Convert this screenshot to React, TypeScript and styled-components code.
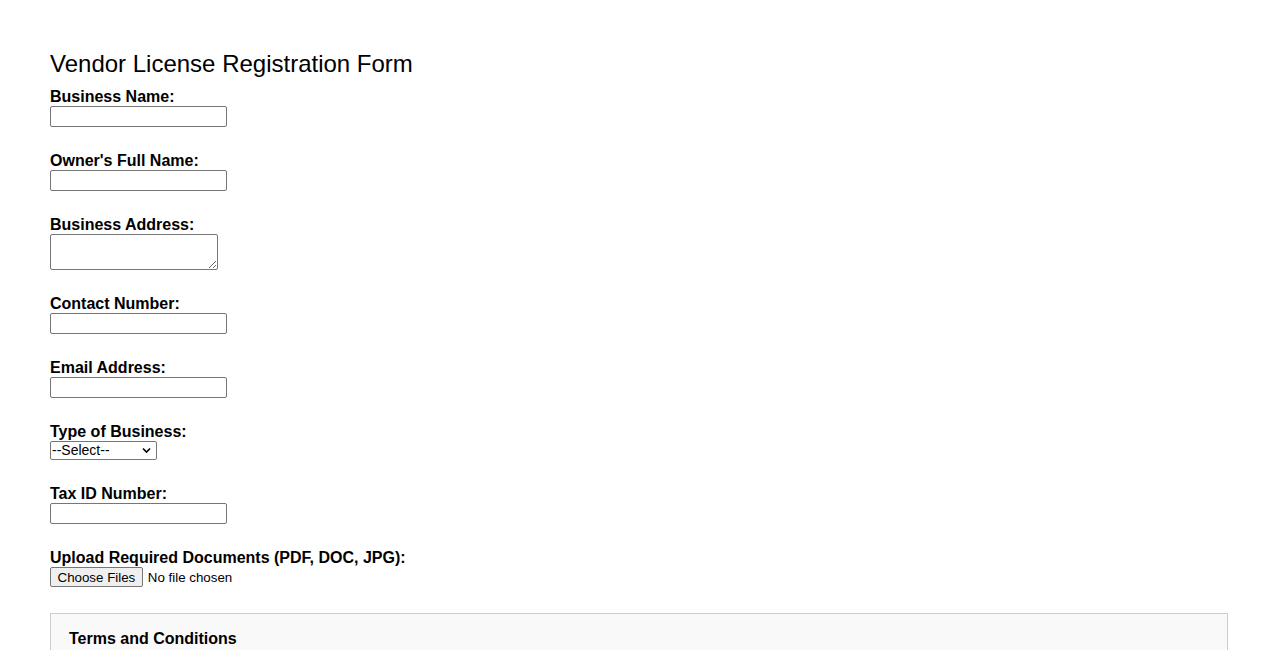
import React from 'react'
import styled, { createGlobalStyle } from 'styled-components'

const GlobalStyle = createGlobalStyle`
	html, body {
		margin: 0;
		padding: 0;
		background: #ffffff;
	}

	body {
		font-family: 'Liberation Sans', Arial, sans-serif;
		color: #000000;
	}
`

const Page = styled.main`
	padding: 50px 50px 40px;
`

const Title = styled.h2`
	font-size: 24px;
	font-weight: normal;
	line-height: 27px;
	margin: 0 0 10px;
`

const Form = styled.form`
	display: flex;
	flex-direction: column;
	align-items: flex-start;
`

const Field = styled.div`
	display: flex;
	flex-direction: column;
	align-items: flex-start;
	margin-bottom: 24px;

	&:last-of-type {
		margin-bottom: 26px;
	}
`

const Label = styled.label`
	display: block;
	font-size: 16px;
	font-weight: bold;
	line-height: 19px;
	margin: 0;
`

const controlFont = `
	font-family: 'Liberation Sans', Arial, sans-serif;
	font-size: 13.333px;
	color: #000000;
`

const TextInput = styled.input`
	${controlFont}
	box-sizing: border-box;
	width: 177px;
	height: 21px;
	padding: 1px 2px;
	border: 1px solid #767676;
	border-radius: 2px;
	background: #ffffff;
	margin: 0;
`

const TextArea = styled.textarea`
	${controlFont}
	box-sizing: border-box;
	width: 168px;
	height: 36px;
	padding: 2px;
	border: 1px solid #767676;
	border-radius: 2px;
	margin: 0;
`

const SelectWrap = styled.div`
	position: relative;
	width: 107px;
	height: 19px;
`

const Select = styled.select`
	${controlFont}
	font-size: 14px;
	appearance: none;
	box-sizing: border-box;
	width: 107px;
	height: 19px;
	padding: 0 18px 0 1px;
	border: 1px solid #767676;
	border-radius: 2px;
	background: #ffffff;
	margin: 0;
	line-height: 17px;
`

const Chevron = styled.svg`
	position: absolute;
	right: 6px;
	top: 6px;
	width: 9px;
	height: 7px;
	pointer-events: none;
`

const FileInput = styled.input`
	${controlFont}
	margin: 0;
	height: 20px;

	&::file-selector-button {
		${controlFont}
		box-sizing: border-box;
		height: 20px;
		padding: 1px 6.5px;
		margin: 0 5px 0 0;
		background: #efefef;
		border: 1px solid #767676;
		border-radius: 2px;
	}
`

const Terms = styled.section`
	box-sizing: border-box;
	width: 100%;
	background: #f9f9f9;
	border: 1px solid #cccccc;
	padding: 15px 18px;
`

const TermsTitle = styled.h3`
	font-size: 16px;
	font-weight: bold;
	line-height: 19px;
	margin: 0 0 10px;
`

const TermsText = styled.p`
	font-size: 14px;
	line-height: 20px;
	margin: 0;
`

export default function App() {
	return (
		<>
			<GlobalStyle />
			<Page>
				<Title>Vendor License Registration Form</Title>
				<Form onSubmit={(e) => e.preventDefault()}>
					<Field>
						<Label htmlFor="businessName">Business Name:</Label>
						<TextInput id="businessName" type="text" />
					</Field>
					<Field>
						<Label htmlFor="ownerName">Owner's Full Name:</Label>
						<TextInput id="ownerName" type="text" />
					</Field>
					<Field>
						<Label htmlFor="address">Business Address:</Label>
						<TextArea id="address" />
					</Field>
					<Field>
						<Label htmlFor="contact">Contact Number:</Label>
						<TextInput id="contact" type="tel" />
					</Field>
					<Field>
						<Label htmlFor="email">Email Address:</Label>
						<TextInput id="email" type="email" />
					</Field>
					<Field>
						<Label htmlFor="businessType">Type of Business:</Label>
						<SelectWrap>
							<Select id="businessType" defaultValue="">
								<option value="">--Select--</option>
								<option value="retail">Retail</option>
								<option value="food">Food Service</option>
								<option value="wholesale">Wholesale</option>
								<option value="services">Services</option>
							</Select>
							<Chevron viewBox="0 0 9 7">
								<path d="M1 1.5 L4.5 5 L8 1.5" fill="none" stroke="#000" strokeWidth="1.6" />
							</Chevron>
						</SelectWrap>
					</Field>
					<Field>
						<Label htmlFor="taxId">Tax ID Number:</Label>
						<TextInput id="taxId" type="text" />
					</Field>
					<Field>
						<Label htmlFor="docs">Upload Required Documents (PDF, DOC, JPG):</Label>
						<FileInput id="docs" type="file" multiple accept=".pdf,.doc,.jpg" />
					</Field>
					<Terms>
						<TermsTitle>Terms and Conditions</TermsTitle>
						<TermsText>
							By submitting this form, you agree that all information provided is accurate and complete.
						</TermsText>
					</Terms>
				</Form>
			</Page>
		</>
	)
}
